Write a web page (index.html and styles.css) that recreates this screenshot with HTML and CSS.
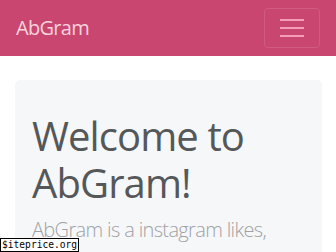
FILE: index.html
```html
<!DOCTYPE html>
<html>
<head>
<meta charset="utf-8">
<link rel="stylesheet" href="styles.css">
</head>
<body>
<nav class="navbar">
  <a class="brand" href="#">AbGram</a>
  <button class="toggler" type="button" aria-label="Toggle navigation">
    <span class="bar"></span><span class="bar"></span><span class="bar"></span>
  </button>
</nav>
<main class="container">
  <section class="jumbotron">
    <h1 class="title">Welcome to AbGram!</h1>
    <p class="lead">AbGram is a instagram likes, followers and views provider.</p>
  </section>
</main>
<div class="watermark">$iteprice.org</div>
</body>
</html>
```
FILE: styles.css
```css
html, body {
  margin: 0;
  padding: 0;
  background: #fff;
  font-family: "Open Sans", "Noto Sans", sans-serif;
  overflow: hidden;
  height: 252px;
}
.navbar {
  background: #c8466f;
  height: 56px;
  box-sizing: border-box;
  padding: 8px 16px;
  display: flex;
  align-items: center;
  justify-content: space-between;
}
.brand {
  color: #fbd3df;
  font-size: 20px;
  line-height: 30px;
  text-decoration: none;
  letter-spacing: -0.7px;
}
.toggler {
  width: 56px;
  height: 40px;
  box-sizing: border-box;
  background: transparent;
  border: 1px solid #d05a82;
  border-radius: 4px;
  display: flex;
  flex-direction: column;
  align-items: center;
  justify-content: center;
  gap: 6px;
  padding: 0;
}
.bar {
  display: block;
  width: 24px;
  height: 2px;
  background: #f59cbb;
}
.container {
  padding: 24px 14px 0 15px;
}
.jumbotron {
  background: #f6f7f9;
  border-radius: 5px;
  padding: 32px 17px;
}
.title {
  margin: 0 0 7px;
  font-size: 40px;
  line-height: 47px;
  font-weight: 400;
  color: #555759;
  letter-spacing: -0.9px;
}
.lead {
  margin: 0;
  font-size: 20px;
  line-height: 34px;
  font-weight: 300;
  color: #9ea2a6;
  letter-spacing: -0.65px;
}
.watermark {
  position: absolute;
  left: 0;
  top: 238px;
  height: 14px;
  box-sizing: border-box;
  padding: 0 1px;
  background: #fff;
  border: 1px solid #000;
  font-family: "DejaVu Sans Mono", monospace;
  font-size: 9.6px;
  line-height: 12px;
  color: #000;
}
```
